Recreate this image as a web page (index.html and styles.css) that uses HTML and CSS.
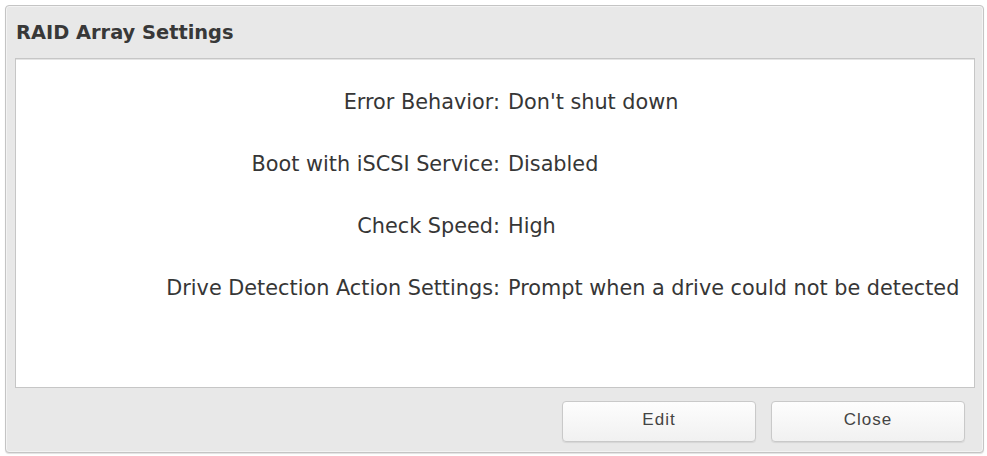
FILE: index.html
```html
<!DOCTYPE html>
<html lang="en">
<head>
<meta charset="utf-8">
<title>RAID Array Settings</title>
<link rel="stylesheet" href="styles.css">
</head>
<body>
<div class="dialog">
  <div class="dialog-title">RAID Array Settings</div>
  <div class="dialog-body">
    <div class="settings">
      <div class="label">Error Behavior:</div>
      <div class="value">Don't shut down</div>
      <div class="label">Boot with iSCSI Service:</div>
      <div class="value">Disabled</div>
      <div class="label">Check Speed:</div>
      <div class="value">High</div>
      <div class="label">Drive Detection Action Settings:</div>
      <div class="value">Prompt when a drive could not be detected</div>
    </div>
  </div>
  <div class="dialog-footer">
    <button class="btn" type="button">Edit</button>
    <button class="btn" type="button">Close</button>
  </div>
</div>
</body>
</html>
```

FILE: styles.css
```css
html, body {
  margin: 0;
  padding: 0;
  background: #ffffff;
}

body {
  padding: 5px 3px 3px 5px;
  font-family: "DejaVu Sans", Verdana, sans-serif;
}

.dialog {
  box-sizing: border-box;
  width: 979px;
  height: 448px;
  background: #e8e8e8;
  border: 1px solid #c4c4c4;
  border-radius: 4px;
  box-shadow: inset 0 0 0 1px #f3f3f3, 0 1px 1px rgba(0, 0, 0, 0.12);
  display: flex;
  flex-direction: column;
  padding: 0 8px 10px 9px;
}

.dialog-title {
  height: 52px;
  box-sizing: border-box;
  padding: 15px 0 0 1px;
  font-size: 19.4px;
  font-weight: bold;
  line-height: 24px;
  color: #383838;
}

.dialog-body {
  box-sizing: border-box;
  height: 330px;
  background: #ffffff;
  border: 1px solid #c6c6c6;
  box-shadow: inset 0 1px 0 #e4e4e4;
}

.settings {
  display: grid;
  grid-template-columns: 484px auto;
  column-gap: 8px;
  row-gap: 38px;
  padding-top: 31px;
  font-size: 20.8px;
  line-height: 24px;
  color: #363636;
}

.label {
  text-align: right;
}

.dialog-footer {
  display: flex;
  justify-content: flex-end;
  gap: 15px;
  padding: 13px 10px 0 0;
}

.btn {
  width: 194px;
  height: 41px;
  border: 1px solid #c9c9c9;
  border-radius: 4px;
  background: linear-gradient(#fdfdfd, #f1f1f1);
  box-shadow: 0 1px 1px rgba(0, 0, 0, 0.08);
  font-family: "Liberation Sans", Arial, sans-serif;
  font-size: 17px;
  letter-spacing: 1px;
  color: #444444;
  padding: 0 0 3px;
}
```
